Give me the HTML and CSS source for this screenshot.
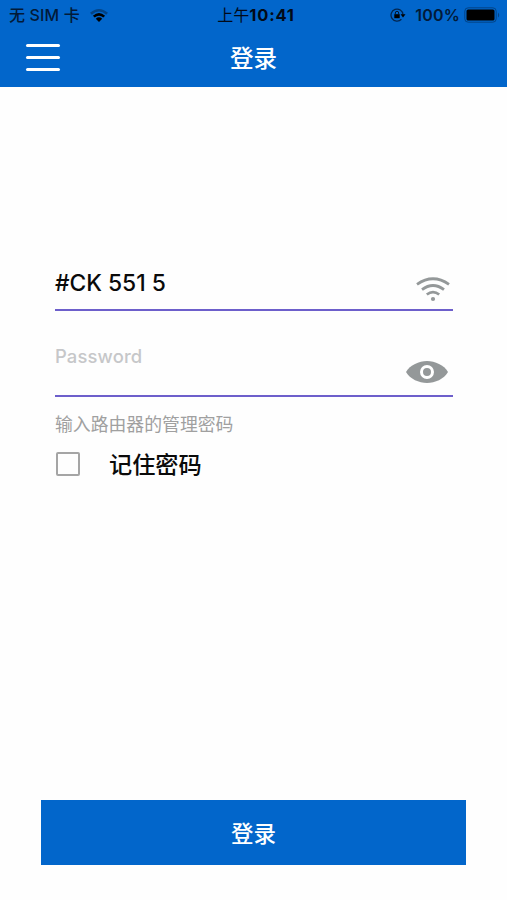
FILE: index.html
```html
<!DOCTYPE html>
<html lang="zh-CN">
<head>
	<meta charset="utf-8">
	<title>登录</title>
	<link rel="stylesheet" href="styles.css">
</head>
<body>
<header class="header">
  <div class="status-bar">
    <div class="status-left">
      <span class="carrier">无 SIM 卡</span>
      <svg class="status-wifi" width="18" height="13" viewBox="0 0 18 13">
        <path d="M0 3.8Q9-3.8 18 3.8L16.2 5.7Q9-.5 1.8 5.7Z" fill="#034487"/>
        <path d="M2.9 6.8Q9 1.2 15.1 6.8L13.3 8.6Q9 4.8 4.7 8.6Z"/>
        <path d="M5.8 9.7Q9 7 12.2 9.7L9 12.9Z"/>
      </svg>
    </div>
    <div class="clock"><span class="noon">上午</span>10:41</div>
    <div class="status-right">
      <svg class="lock" width="16" height="14" viewBox="0 0 16 14">
        <path d="M11.4 11.2A6 6 0 1 1 13 6.6" fill="none" stroke="#03264f" stroke-width="1.3"/>
        <path d="M10.6 6.3h4.9L13 9.4Z"/>
        <rect x="4.3" y="6.2" width="5.4" height="4"/>
        <path d="M5.3 6.4V5a1.7 1.7 0 0 1 3.4 0v1.4" fill="none" stroke="#03162e" stroke-width="1"/>
      </svg>
      <span class="battery-level">100%</span>
      <svg class="battery" width="37" height="16" viewBox="0 0 37 16">
        <rect x=".8" y=".8" width="31.4" height="14.4" rx="3.4" fill="none" stroke="#034487" stroke-width="1"/>
        <rect x="2.5" y="2.5" width="28" height="11" rx="1.6"/>
        <path d="M34 5.4q2.4 2.6 0 5.2Z" fill="#034487"/>
      </svg>
    </div>
  </div>
  <nav class="nav-bar">
    <div class="menu-btn"><span></span><span></span><span></span></div>
    <h1 class="title">登录</h1>
  </nav>
</header>

<main class="form">
  <div class="field field-name">
    <div class="name">#CK 551 5</div>
    <svg class="wifi-icon" width="34" height="25" viewBox="0 0 34 25" fill="none" stroke="#949899" stroke-width="2.8">
      <path d="M1 7.3Q17-3.9 33 7.3"/>
      <path d="M6 12.6Q17 4.4 28 12.6"/>
      <path d="M10.8 17.5Q17 12.8 23.2 17.5"/>
      <circle cx="17" cy="22" r="2.1" fill="#949899" stroke="none"/>
    </svg>
  </div>
  <div class="field field-password">
    <div class="placeholder">Password</div>
    <svg class="eye-icon" width="42" height="22" viewBox="0 0 42 22">
      <path d="M0 11C4 4 13 0 21 0S38 4 42 11C38 18 29 22 21 22S4 18 0 11Z" fill="#949899"/>
      <circle cx="21" cy="11" r="5.5" fill="#949899" stroke="#fff" stroke-width="3"/>
    </svg>
  </div>
  <div class="hint">输入路由器的管理密码</div>
  <div class="remember">
    <div class="checkbox"></div>
    <div class="remember-label">记住密码</div>
  </div>
</main>

<div class="login-btn">登录</div>
</body>
</html>
```

FILE: styles.css
```css
html, body {
  height: 100%;
  margin: 0;
}

body {
  display: flex;
  flex-direction: column;
  overflow: hidden;
  background-color: #fefefe;
  color: #0a0a0a;
  font-family: Inter, 'Noto Sans CJK SC', sans-serif;
  font-weight: 500;
}

svg {
  display: block;
}

.header {
  height: 87px;
  background-color: #0266cb;
}

.status-bar {
  display: grid;
  grid-template-columns: 1fr auto 1fr;
  align-items: center;
  height: 30px;
  padding: 0 6px 0 9px;
  color: #021a38;
  font-size: 16px;
  line-height: 30px;
}

.status-left, .status-right {
  display: flex;
  align-items: center;
}

.carrier {
  letter-spacing: 0.15px;
}

.status-wifi {
  margin-left: 10px;
}

.status-right {
  justify-content: flex-end;
}

.clock {
  padding-left: 2px;
  color: #020a18;
  font-size: 16.5px;
  font-weight: 700;
  letter-spacing: 0.8px;
  white-space: nowrap;
}

.noon {
  font-size: 16px;
  font-weight: 400;
  letter-spacing: 0;
}

.battery-level {
  margin: 0 4px 0 9px;
  font-weight: 600;
  letter-spacing: 0.2px;
}

.nav-bar {
  display: grid;
  grid-template-columns: 34px 1fr 34px;
  align-items: center;
  height: 56px;
  padding: 0 26px;
}

.menu-btn {
  display: flex;
  flex-direction: column;
  gap: 9px;
  margin-bottom: 2px;
}

.menu-btn span {
  height: 3px;
  border-radius: 2px;
  background-color: #fff;
}

.title {
  margin: 1px 0 0;
  color: #fff;
  font-size: 23.5px;
  font-weight: 500;
  line-height: 56px;
  text-align: center;
}

.form {
  flex: 1;
  padding: 168px 54px 0 55px;
}

.field {
  display: flex;
  justify-content: space-between;
  box-sizing: border-box;
  border-bottom: 2px solid #6d5fcb;
}

.field-name {
  height: 56px;
}

.name {
  margin-top: 12px;
  font-size: 22.8px;
  line-height: 32px;
}

.wifi-icon {
  margin: 22px 3px 0 0;
}

.field-password {
  height: 86px;
}

.placeholder {
  margin-top: 33px;
  color: #c6c7c9;
  font-size: 18.4px;
  letter-spacing: 0.15px;
  line-height: 24px;
}

.eye-icon {
  margin: 50px 5px 0 0;
}

.hint {
  margin-top: 15px;
  color: #a0a0a0;
  font-size: 17.85px;
  font-weight: 400;
  line-height: 26px;
}

.remember {
  display: flex;
  align-items: center;
  margin-top: 9px;
}

.checkbox {
  box-sizing: border-box;
  width: 24px;
  height: 24px;
  margin: 0 29px 0 1px;
  border: 2px solid #a5a5a5;
  border-radius: 2px;
}

.remember-label {
  margin-top: 2px;
  font-size: 23.2px;
  line-height: 32px;
}

.login-btn {
  height: 65px;
  margin: 0 41px 35px;
  background-color: #0266cb;
  color: #fff;
  font-size: 22.5px;
  line-height: 67px;
  text-align: center;
}
```
